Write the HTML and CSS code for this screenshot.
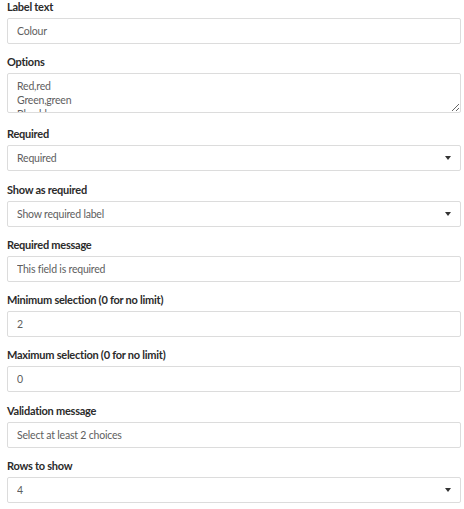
FILE: index.html
```html
<!DOCTYPE html>
<html lang="en">
<head>
  <meta charset="UTF-8" />
  <title>Field settings</title>
  <link rel="stylesheet" href="styles.css">
</head>
<body>
  <form class="settings">
    <div class="field">
      <label>Label text</label>
      <input type="text" value="Colour" />
    </div>
    <div class="field field-area">
      <label>Options</label>
      <textarea>Red,red
Green,green
Blue,blue</textarea>
    </div>
    <div class="field">
      <label>Required</label>
      <div class="select"><select><option>Required</option></select></div>
    </div>
    <div class="field">
      <label>Show as required</label>
      <div class="select"><select><option>Show required label</option></select></div>
    </div>
    <div class="field">
      <label>Required message</label>
      <input type="text" value="This field is required" />
    </div>
    <div class="field">
      <label>Minimum selection (0 for no limit)</label>
      <input type="text" value="2" />
    </div>
    <div class="field">
      <label>Maximum selection (0 for no limit)</label>
      <input type="text" value="0" />
    </div>
    <div class="field">
      <label>Validation message</label>
      <input type="text" value="Select at least 2 choices" />
    </div>
    <div class="field">
      <label>Rows to show</label>
      <div class="select"><select><option>4</option></select></div>
    </div>
  </form>
</body>
</html>
```
FILE: styles.css
```css
body {
  margin: 0;
  padding: 0 3px 0 7px;
  font-family: 'Lato', sans-serif;
  font-size: 11px;
  color: #333;
  background: #fff;
}
.field {
  margin-bottom: 11.3px;
}
.field-area {
  margin-bottom: 14px;
}
.field label {
  display: block;
  font-weight: bold;
  line-height: 14px;
  letter-spacing: -0.25px;
  margin-bottom: 4px;
  color: #2b2b2b;
}
.field input,
.field textarea,
.field select {
  display: block;
  box-sizing: border-box;
  width: 100%;
  margin: 0;
  font-family: inherit;
  font-size: 10.5px;
  letter-spacing: -0.2px;
  color: #5e5e5e;
  background: #fff;
  border: 1px solid #dcdcdc;
  border-radius: 2px;
  outline: none;
}
.field input,
.field select {
  height: 26px;
  padding: 0 9px;
}
.field textarea {
  height: 40px;
  padding: 5px 9px;
  line-height: 14px;
  resize: vertical;
  overflow: hidden;
}
.select {
  position: relative;
}
.select select {
  appearance: none;
  -webkit-appearance: none;
}
.select::after {
  content: '';
  position: absolute;
  right: 10px;
  top: 11px;
  border-left: 3px solid transparent;
  border-right: 3px solid transparent;
  border-top: 4px solid #333;
  pointer-events: none;
}
```
